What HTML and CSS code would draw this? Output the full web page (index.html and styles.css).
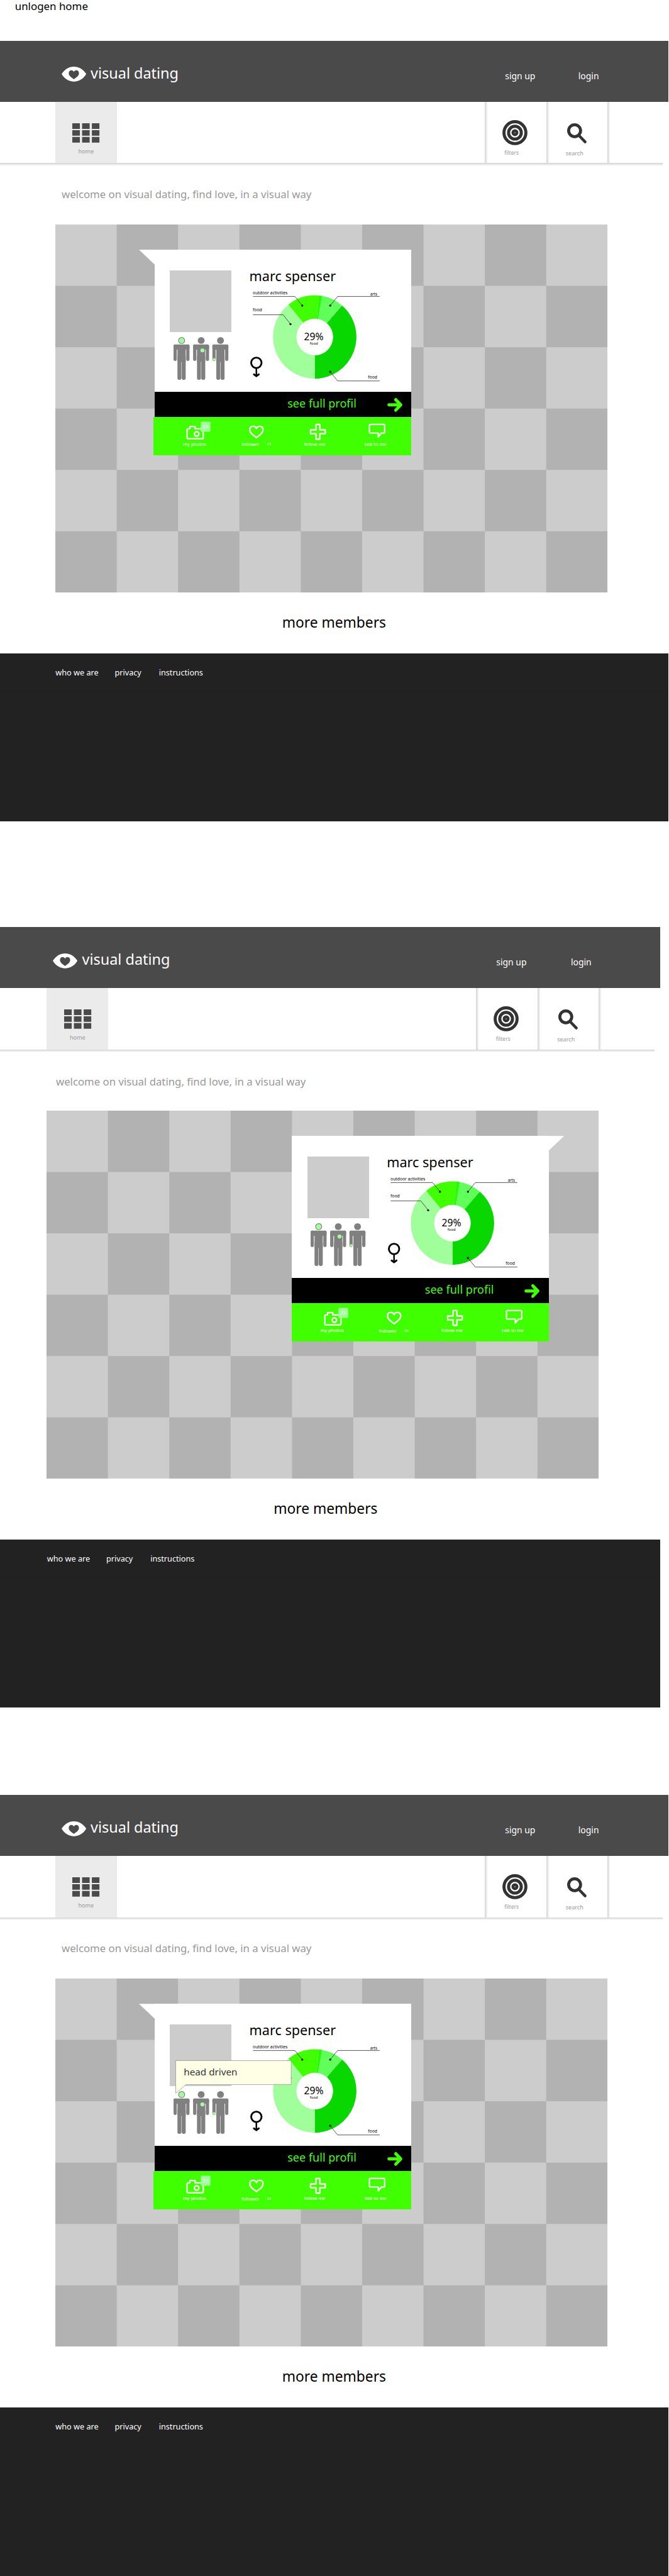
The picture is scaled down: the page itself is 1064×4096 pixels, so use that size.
FILE: index.html
```html
<!DOCTYPE html>
<html lang="en">
<head>
<meta charset="utf-8">
<title>visual dating</title>
<link rel="stylesheet" href="styles.css">
</head>
<body>

<svg class="defs" aria-hidden="true">
  <defs>
    <g id="eye">
      <path fill="#fff" d="M0 14.5C6 5 14 0 23.8 0S42 5 47.8 14.5C42 24 33.6 29 23.8 29S6 24 0 14.5Z"/>
      <path fill="#4a4a4a" d="M23.8 10.3C22.3 5.6 13.9 5.4 13.9 13C13.9 18 19.6 21 23.8 24.3C28 21 33.7 18 33.7 13C33.7 5.4 25.3 5.6 23.8 10.3Z"/>
    </g>
    <g id="tiles" fill="#4a4a4a">
      <path d="M0 0h14.7v10.9H0zM19 0h14.7v10.9H19zM38 0h14.7v10.9H38zM0 13.3h14.7v10.9H0zM19 13.3h14.7v10.9H19zM38 13.3h14.7v10.9H38zM0 26.7h14.7v10.9H0zM19 26.7h14.7v10.9H19zM38 26.7h14.7v10.9H38z"/>
    </g>
    <g id="target" fill="none" stroke="#333">
      <circle cx="24.4" cy="24.4" r="21.3" stroke-width="6"/>
      <circle cx="24.4" cy="24.4" r="12.4" stroke-width="6"/>
      <circle cx="24.4" cy="24.4" r="3.8" stroke-width="5.8"/>
    </g>
    <g id="lens" fill="none" stroke="#333">
      <circle cx="14.5" cy="14.4" r="11.6" stroke-width="5.8"/>
      <path d="M23.3 24.2L35 36.2" stroke-width="5.4" stroke-linecap="round"/>
    </g>
    <g id="body" fill="#808080">
      <circle cx="352.4" cy="661.3" r="6.6"/>
      <rect x="336.7" y="669" width="31" height="10" rx="3"/>
      <rect x="336.7" y="669" width="6.3" height="32" rx="2.8"/>
      <rect x="361.4" y="669" width="6.3" height="32" rx="2.8"/>
      <rect x="344.3" y="672" width="16" height="31"/>
      <rect x="344.3" y="690" width="7.6" height="47.8" rx="3"/>
      <rect x="352.6" y="690" width="7.7" height="47.8" rx="3"/>
    </g>
    <g id="people">
      <use href="#body"/>
      <use href="#body" x="38"/>
      <use href="#body" x="75.5"/>
      <g fill="#a0ff9a">
        <circle cx="352.4" cy="661.3" r="5.2"/>
        <circle cx="392.8" cy="680.5" r="3.9"/>
        <circle cx="415.6" cy="697.9" r="2.7"/>
      </g>
    </g>
    <g id="chart">
      <g transform="translate(611.8 654.4)">
        <path fill="#08d800" d="M0 0L53.1-61.1A81 81 0 0 1 0 81Z"/>
        <path fill="#60ff5a" d="M0 0L14.3-79.7A81 81 0 0 1 53.1-61.1Z"/>
        <path fill="#20ff00" d="M0 0L8.2-80.6A81 81 0 0 1 14.3-79.7Z"/>
        <path fill="#40ff00" d="M0 0L-51.2-62.8A81 81 0 0 1 8.2-80.6Z"/>
        <path fill="#a0ff9a" d="M0 0V81A81 81 0 0 1-51.2-62.8Z"/>
        <circle r="35.6" fill="#fff"/>
      </g>
      <path fill="none" stroke="#333" d="M491.8 575.7H573.2L587.5 593.4M491.8 611.3H550.4L564.6 629.3M737.9 575.7H656.2L641.8 593.4M737.9 739.8H656.2L641.8 722"/>
      <circle cx="587.5" cy="593.4" r="2"/>
      <circle cx="564.6" cy="629.3" r="2"/>
      <circle cx="641.8" cy="593.4" r="2"/>
      <circle cx="641.8" cy="722" r="2"/>
      <g fill="none" stroke="#000" stroke-linecap="round" stroke-linejoin="round">
        <circle cx="498.3" cy="704.5" r="10.1" stroke-width="3.5"/>
        <path stroke-width="3" d="M498.3 716V729.5"/>
        <path stroke-width="3.6" d="M493.6 727L498.3 730.6L503 727"/>
      </g>
    </g>
    <g id="arrow" fill="none" stroke="#40ff00" stroke-width="6" stroke-linecap="round" stroke-linejoin="round">
      <path d="M3 13.2H26M16.2 3L26 13.2L16.2 23.4"/>
    </g>
    <g id="camera">
      <path fill="none" stroke="#fff" stroke-width="2.7" stroke-linejoin="round" d="M363.5 835q0-1.8 1.8-1.8H368.8V828.8H379V833.2H393q1.8 0 1.8 1.8V850.7q0 1.8-1.8 1.8H365.3q-1.8 0-1.8-1.8Z"/>
      <circle cx="382" cy="843.3" r="4.4" fill="none" stroke="#fff" stroke-width="2.8"/>
      <rect x="390" y="819.5" width="19" height="19.4" rx="2.2" fill="#a0ff9a"/>
    </g>
    <g id="heart" fill="none" stroke="#fff" stroke-width="2.8" stroke-linejoin="round">
      <path d="M498.2 832.8C496.5 827 485.4 826 485.4 835.2C485.4 842 492 845.5 498.2 850.3C504.4 845.5 511 842 511 835.2C511 826 499.9 827 498.2 832.8Z"/>
    </g>
    <g id="plus" fill="none" stroke="#fff" stroke-width="2.8" stroke-linejoin="round">
      <path d="M614 824.7h7.4v10.6h10.6v7.4h-10.6v10.6h-7.4v-10.6h-10.6v-7.4h10.6z"/>
    </g>
    <g id="bubble" fill="none" stroke="#fff" stroke-width="2.7" stroke-linejoin="round">
      <path d="M719.2 824.7h25.8q2 0 2 2v12.9q0 1.8-2 1.8h-4.5l-6 7.6v-7.6h-15.3q-1.8 0-1.8-1.8v-12.9q0-2 1.8-2z"/>
    </g>
  </defs>
</svg>

<h1 class="note">unlogen home</h1>

<section class="screen">
  <header class="header">
    <svg class="eye" viewBox="0 0 47.8 29"><use href="#eye"/></svg>
    <span class="brand">visual dating</span>
    <nav class="account"><a>sign up</a><a>login</a></nav>
  </header>
  <nav class="menu">
    <a class="tab home"><svg class="tiles" viewBox="0 0 52.7 37.6"><use href="#tiles"/></svg><span>home</span></a>
    <a class="tab filters"><svg class="target" viewBox="0 0 48.8 48.8"><use href="#target"/></svg><span>filters</span></a>
    <a class="tab search"><svg class="lens" viewBox="0 0 38 39"><use href="#lens"/></svg><span>search</span></a>
    <i class="menu-end"></i>
  </nav>
  <p class="intro">welcome on visual dating, find love, in a visual way</p>
  <div class="members">
    <article class="card">
      <div class="profile">
        <div class="who">
          <div class="photo"></div>
          <svg class="people" viewBox="336.7 654.7 107 83.3"><use href="#people"/></svg>
        </div>
        <div class="about">
          <h2>marc spenser</h2>
          <svg class="chart" viewBox="484 552 276 193">
            <use href="#chart"/>
            <g class="chart-label">
              <text x="491.4" y="572">outdoor activities</text>
              <text x="491.4" y="604.3">food</text>
              <text x="719.4" y="573.6" class="arts">arts</text>
              <text x="715.2" y="734.8">food</text>
            </g>
            <text class="percent" x="591" y="661.3">29%</text>
            <text class="topic" x="602.3" y="669.6">food</text>
          </svg>
        </div>
      </div>
      <a class="full"><span>see full profil</span><svg class="arrow" viewBox="0 0 29 26.4"><use href="#arrow"/></svg></a>
      <div class="actions">
        <a><svg viewBox="354.2 820 48 37.5"><use href="#camera"/><text class="badge" x="393.7" y="832.8">23</text></svg><span>my photos</span></a>
        <a class="follower"><svg viewBox="474 820 48 37.5"><use href="#heart"/></svg><span>follower</span><small>23</small></a>
        <a class="follow"><svg viewBox="593.7 820 48 37.5"><use href="#plus"/></svg><span>follow me</span></a>
        <a class="talk"><svg viewBox="708.1 820 48 37.5"><use href="#bubble"/></svg><span>talk to me</span></a>
      </div>
    </article>
  </div>
  <p class="more">more members</p>
  <footer class="footer"><nav><a>who we are</a><a>privacy</a><a>instructions</a></nav></footer>
</section>

<section class="screen right">
  <header class="header">
    <svg class="eye" viewBox="0 0 47.8 29"><use href="#eye"/></svg>
    <span class="brand">visual dating</span>
    <nav class="account"><a>sign up</a><a>login</a></nav>
  </header>
  <nav class="menu">
    <a class="tab home"><svg class="tiles" viewBox="0 0 52.7 37.6"><use href="#tiles"/></svg><span>home</span></a>
    <a class="tab filters"><svg class="target" viewBox="0 0 48.8 48.8"><use href="#target"/></svg><span>filters</span></a>
    <a class="tab search"><svg class="lens" viewBox="0 0 38 39"><use href="#lens"/></svg><span>search</span></a>
    <i class="menu-end"></i>
  </nav>
  <p class="intro">welcome on visual dating, find love, in a visual way</p>
  <div class="members">
    <article class="card">
      <div class="profile">
        <div class="who">
          <div class="photo"></div>
          <svg class="people" viewBox="336.7 654.7 107 83.3"><use href="#people"/></svg>
        </div>
        <div class="about">
          <h2>marc spenser</h2>
          <svg class="chart" viewBox="484 552 276 193">
            <use href="#chart"/>
            <g class="chart-label">
              <text x="491.4" y="572">outdoor activities</text>
              <text x="491.4" y="604.3">food</text>
              <text x="719.4" y="573.6" class="arts">arts</text>
              <text x="715.2" y="734.8">food</text>
            </g>
            <text class="percent" x="591" y="661.3">29%</text>
            <text class="topic" x="602.3" y="669.6">food</text>
          </svg>
        </div>
      </div>
      <a class="full"><span>see full profil</span><svg class="arrow" viewBox="0 0 29 26.4"><use href="#arrow"/></svg></a>
      <div class="actions">
        <a><svg viewBox="354.2 820 48 37.5"><use href="#camera"/><text class="badge" x="393.7" y="832.8">23</text></svg><span>my photos</span></a>
        <a class="follower"><svg viewBox="474 820 48 37.5"><use href="#heart"/></svg><span>follower</span><small>23</small></a>
        <a class="follow"><svg viewBox="593.7 820 48 37.5"><use href="#plus"/></svg><span>follow me</span></a>
        <a class="talk"><svg viewBox="708.1 820 48 37.5"><use href="#bubble"/></svg><span>talk to me</span></a>
      </div>
    </article>
  </div>
  <p class="more">more members</p>
  <footer class="footer"><nav><a>who we are</a><a>privacy</a><a>instructions</a></nav></footer>
</section>

<section class="screen last">
  <header class="header">
    <svg class="eye" viewBox="0 0 47.8 29"><use href="#eye"/></svg>
    <span class="brand">visual dating</span>
    <nav class="account"><a>sign up</a><a>login</a></nav>
  </header>
  <nav class="menu">
    <a class="tab home"><svg class="tiles" viewBox="0 0 52.7 37.6"><use href="#tiles"/></svg><span>home</span></a>
    <a class="tab filters"><svg class="target" viewBox="0 0 48.8 48.8"><use href="#target"/></svg><span>filters</span></a>
    <a class="tab search"><svg class="lens" viewBox="0 0 38 39"><use href="#lens"/></svg><span>search</span></a>
    <i class="menu-end"></i>
  </nav>
  <p class="intro">welcome on visual dating, find love, in a visual way</p>
  <div class="members">
    <article class="card">
      <div class="profile">
        <div class="who">
          <div class="photo"></div>
          <svg class="people" viewBox="336.7 654.7 107 83.3"><use href="#people"/></svg>
        </div>
        <div class="about">
          <h2>marc spenser</h2>
          <svg class="chart" viewBox="484 552 276 193">
            <use href="#chart"/>
            <g class="chart-label">
              <text x="491.4" y="572">outdoor activities</text>
              <text x="719.4" y="573.6" class="arts">arts</text>
              <text x="715.2" y="734.8">food</text>
            </g>
            <text class="percent" x="591" y="661.3">29%</text>
            <text class="topic" x="602.3" y="669.6">food</text>
          </svg>
        </div>
      </div>
      <a class="full"><span>see full profil</span><svg class="arrow" viewBox="0 0 29 26.4"><use href="#arrow"/></svg></a>
      <div class="actions">
        <a><svg viewBox="354.2 820 48 37.5"><use href="#camera"/><text class="badge" x="393.7" y="832.8">23</text></svg><span>my photos</span></a>
        <a class="follower"><svg viewBox="474 820 48 37.5"><use href="#heart"/></svg><span>follower</span><small>23</small></a>
        <a class="follow"><svg viewBox="593.7 820 48 37.5"><use href="#plus"/></svg><span>follow me</span></a>
        <a class="talk"><svg viewBox="708.1 820 48 37.5"><use href="#bubble"/></svg><span>talk to me</span></a>
      </div>
      <div class="tip">
        <svg viewBox="0 0 226 66"><path fill="#ffffe6" stroke="#999" d="M.6.6H225V47.2H20.6L.6 64Z"/></svg>
        <span>head driven</span>
      </div>
    </article>
  </div>
  <p class="more">more members</p>
  <footer class="footer"><nav><a>who we are</a><a>privacy</a><a>instructions</a></nav></footer>
</section>

</body>
</html>
```
FILE: styles.css
```css
/* 1rem is ten layout units */
html {
  font-size: 8.1865px;
}

* {
  box-sizing: border-box;
}

body {
  margin: 0;
  width: 1064px;
  height: 4096px;
  overflow: hidden;
  display: flex;
  flex-direction: column;
  background: #fff;
  color: #000;
  font-family: "Noto Sans", "Open Sans", sans-serif;
}

h1, h2, p {
  margin: 0;
  font-weight: 400;
}

svg {
  display: block;
  flex: none;
  overflow: visible;
}

span, a, small {
  white-space: nowrap;
}

.defs {
  position: absolute;
  width: 0;
  height: 0;
}

.note {
  flex: none;
  height: 7.9rem;
  padding-left: 2.9rem;
  font-size: 2.065rem;
  line-height: 2.34rem;
}

/* one screen of the flow */
.screen {
  --side: 10.7rem;
  --wide: 129.8rem;
  flex: none;
  height: 172.13rem;
  display: flex;
  flex-direction: column;
}

.screen.right {
  --side: 9.05rem;
  --wide: 128.2rem;
  height: 168.57rem;
}

.screen.last {
  flex: 1;
  height: auto;
}

.header {
  flex: none;
  display: flex;
  align-items: flex-start;
  width: var(--wide);
  height: 11.9rem;
  padding: 0 13.45rem 0 calc(var(--side) + 1.22rem);
  background: #4a4a4a;
  color: #fff;
}

.right .header {
  padding-right: 13.3rem;
}

.eye {
  width: 4.78rem;
  height: 2.9rem;
  margin-top: 5.1rem;
}

.brand {
  margin: 4.69rem 0 0 .9rem;
  font-size: 2.864rem;
  line-height: 3.2rem;
}

.account {
  display: flex;
  gap: 8.35rem;
  margin: 5.87rem 0 0 auto;
  font-size: 1.7rem;
  line-height: 2rem;
}

.right .account {
  gap: 8.6rem;
}

.menu {
  position: relative;
  flex: none;
  display: flex;
  width: calc(var(--wide) - 1rem);
  height: 11.9rem;
  padding-left: var(--side);
}

.menu::after {
  content: "";
  position: absolute;
  left: 0;
  top: 100%;
  width: 100%;
  height: .55rem;
  background: linear-gradient(#d2d2d2, #fff);
}

.tab {
  display: flex;
  flex-direction: column;
  color: #999;
  font-size: 1.11rem;
  line-height: 1.4rem;
}

.tab svg {
  margin-bottom: auto;
}

.home {
  width: 12rem;
  margin-right: 71.45rem;
  padding: 4.1rem 0 1.6rem 3.4rem;
  background: #ebebeb;
}

.home span {
  margin-left: 1.1rem;
}

.filters,
.search,
.menu-end {
  background: linear-gradient(90deg, #d4d4d4, #fff) 0 0 / .6rem 100% no-repeat;
}

.filters {
  width: 11.95rem;
  padding: 3.5rem 0 1.35rem 3.45rem;
  font-size: 1.04rem;
}

.filters span {
  margin-left: .4rem;
}

.search {
  width: 11.85rem;
  padding: 4.15rem 0 1.25rem 3.8rem;
}

.search svg {
  margin-left: .25rem;
}

.menu-end {
  width: .6rem;
}

.tiles {
  width: 5.27rem;
  height: 3.76rem;
}

.target {
  width: 4.88rem;
  height: 4.88rem;
}

.lens {
  width: 3.8rem;
  height: 3.9rem;
}

.intro {
  flex: none;
  height: 11.9rem;
  padding: 4.55rem 0 0 calc(var(--side) + 1.27rem);
  color: #999;
  font-size: 2.048rem;
  line-height: 3rem;
}

.right .intro {
  padding: 4.85rem 0 0 calc(var(--side) + 1.82rem);
}

.members {
  position: relative;
  flex: none;
  width: 107.3rem;
  height: 71.5rem;
  margin-left: var(--side);
  background: conic-gradient(#b2b2b2 25%, #ccc 0 50%, #b2b2b2 0 75%, #ccc 0) 0 0 / 23.844rem 23.833rem;
}

/* profile card */
.card {
  position: absolute;
  left: 19.3rem;
  top: 4.9rem;
  width: 49.9rem;
}

.right .card {
  left: 47.65rem;
}

.card::before {
  content: "";
  position: absolute;
  top: 0;
  right: calc(100% - .05rem);
  width: 3.05rem;
  height: 2.9rem;
  background: #fff;
  clip-path: polygon(0 0, 100% 0, 100% 100%);
}

.right .card::before {
  right: auto;
  left: calc(100% - .05rem);
  clip-path: polygon(0 0, 100% 0, 0 100%);
}

.profile {
  display: flex;
  height: 27.65rem;
  background: #fff;
}

.who {
  width: 18.4rem;
  padding: 4.05rem 0 0 3rem;
}

.photo {
  width: 11.95rem;
  height: 11.9rem;
  background: #ccc;
}

.people {
  width: 10.7rem;
  height: 8.33rem;
  margin: 1.05rem 0 0 .67rem;
}

.about {
  padding-top: 3.7rem;
}

.about h2 {
  padding-left: .05rem;
  font-size: 2.641rem;
  line-height: 3rem;
}

.chart {
  width: 27.6rem;
  height: 19.3rem;
}

.chart-label {
  font-size: 8.25px;
}

.arts {
  font-size: 7.6px;
}

.percent {
  font-size: 19.1px;
}

.topic {
  font-size: 7.2px;
}

.full {
  display: flex;
  height: 4.8rem;
  padding-left: 25.85rem;
  background: #000;
  color: #40ff00;
  font-size: 2.205rem;
  line-height: 4.56rem;
}

.arrow {
  width: 2.93rem;
  height: 2.64rem;
  margin: 1.22rem 0 0 5.95rem;
}

.actions {
  display: grid;
  grid-template-columns: 12rem 11.96rem 11.94rem 10.96rem;
  height: 7.45rem;
  margin-left: -.17rem;
  padding: 1.05rem 0 0 1.99rem;
  background: #40ff00;
  color: #fff;
  font-size: .91rem;
  line-height: 1rem;
}

.right .actions {
  margin-left: 0;
  padding-left: 1.82rem;
}

.actions a {
  display: flex;
  flex-wrap: wrap;
  justify-content: center;
  align-content: flex-start;
}

.actions svg {
  width: 4.8rem;
  height: 3.75rem;
  margin: 0 3rem;
}

.actions .follower svg {
  margin-bottom: .06rem;
}

.follower small {
  margin-left: 1.45rem;
  font-size: .7rem;
}

.follow span {
  margin-right: 1.2rem;
}

.talk span {
  margin-right: .5rem;
}

.badge {
  fill: #fff;
  font-size: 9.1px;
}

.tip {
  position: absolute;
  left: 4.1rem;
  top: 10.95rem;
}

.tip svg {
  width: 22.6rem;
  height: 6.6rem;
}

.tip span {
  position: absolute;
  left: 1.6rem;
  top: 0;
  color: #333;
  font-size: 1.864rem;
  line-height: 4.6rem;
}

.more {
  flex: none;
  width: calc(2 * var(--side) + 108.4rem);
  height: 11.85rem;
  padding-top: 4.4rem;
  font-size: 2.782rem;
  line-height: 3rem;
  text-align: center;
}

.footer {
  flex: none;
  width: var(--wide);
  height: 32.6rem;
  background: #222;
  color: #fff;
}

.last .footer {
  flex: 1;
  height: auto;
}

.footer nav {
  display: flex;
  height: 7.3rem;
  padding-left: calc(var(--side) + .08rem);
  border-bottom: 1px solid #1e1e1e;
  font-size: 1.55rem;
  line-height: 7.35rem;
}

.footer a:nth-child(2) {
  margin: 0 3.4rem 0 3.15rem;
}
```
